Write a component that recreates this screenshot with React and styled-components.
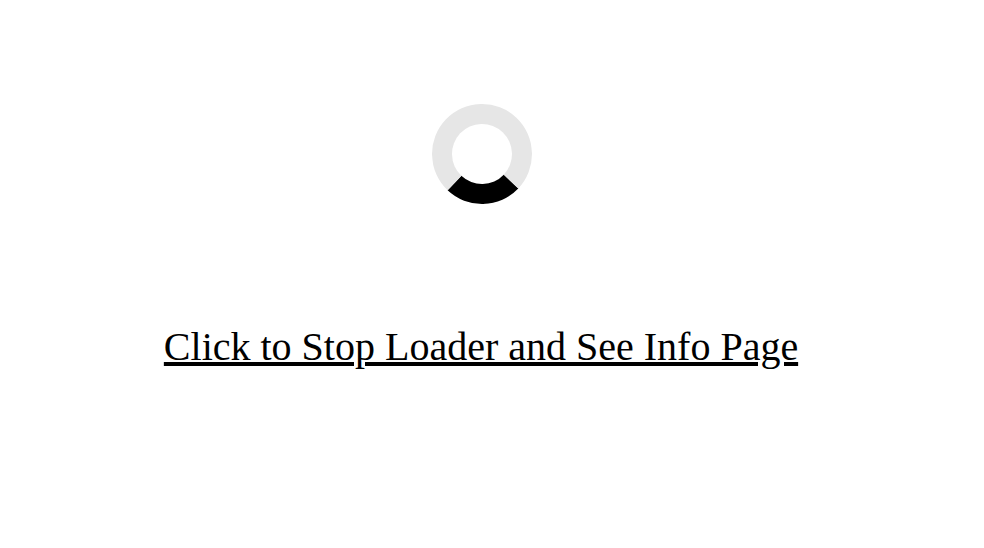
import React from "react";
import styled, { createGlobalStyle } from "styled-components";

const GlobalStyle = createGlobalStyle`
  body {
    margin: 0;
    background: #fff;
    overflow: hidden;
  }
`;

const Page = styled.main`
  display: flex;
  flex-direction: column;
  align-items: center;
  box-sizing: border-box;
  width: 962px;
  height: 548px;
  padding-top: 104px;
`;

const Spinner = styled.div`
  box-sizing: border-box;
  width: 100px;
  height: 100px;
  margin-left: 2px;
  border: 20px solid #e6e6e6;
  border-bottom-color: #000;
  border-radius: 50%;
  transform: rotate(-1.5deg);
`;

const StopLink = styled.a`
  margin-top: 120px;
  color: #000;
  font: 40px/46px "Liberation Serif", "Times New Roman", serif;
  text-decoration: underline;
  text-decoration-thickness: 4px;
  white-space: nowrap;
  cursor: pointer;
`;

export default function App() {
  return (
    <>
      <GlobalStyle />
      <Page>
        <Spinner role="status" aria-label="Loading" />
        <StopLink>Click to Stop Loader and See Info Page</StopLink>
      </Page>
    </>
  );
}
